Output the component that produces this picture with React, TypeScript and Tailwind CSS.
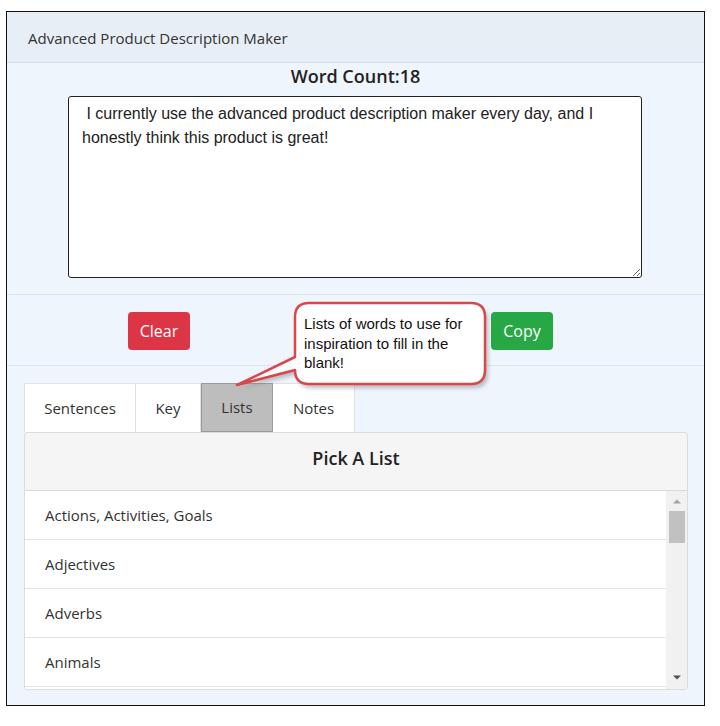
import React from "react";

const items = ["Actions, Activities, Goals", "Adjectives", "Adverbs", "Animals"];

export default function App() {
  const ui = { fontFamily: '"Open Sans", "Noto Sans", sans-serif' };
  const arial = { fontFamily: '"Liberation Sans", Arial, sans-serif' };
  return (
    <div className="relative w-[720px] h-[726px] bg-white pt-[11px] pl-[6px]" style={ui}>
      <div className="w-[699px] h-[695px] border border-[#111] bg-[#eef5fd] flex flex-col">
        {/* header */}
        <div className="h-[51px] shrink-0 bg-[#e8eef6] border-b border-[#d3dbe4] flex items-center pl-[21px] pt-[2px] text-[15px] text-[#333]">
          Advanced Product Description Maker
        </div>
        {/* word count section */}
        <div className="border-b border-[#dae3ed] pb-[16px]">
          <div className="text-center text-[18px] leading-[26px] font-semibold text-[#222]">Word Count:18</div>
          <textarea
            readOnly
            wrap="off"
            className="block mt-[7px] ml-[61px] w-[574px] h-[182px] bg-white border border-[#222] rounded-[3px] pl-[13px] pt-[5px] text-[16px] leading-[24px] text-[#222] overflow-hidden outline-none"
            style={arial}
            value={" I currently use the advanced product description maker every day, and I\nhonestly think this product is great!"}
          />
        </div>
        {/* buttons */}
        <div className="border-b border-[#dae3ed] pt-[17px] pb-[15px] flex">
          <div className="ml-[121px] w-[62px] h-[38px] rounded-[4px] bg-[#dc3545] text-white text-[16px] flex items-center justify-center">Clear</div>
          <div className="ml-[301px] w-[62px] h-[38px] rounded-[4px] bg-[#28a745] text-white text-[16px] flex items-center justify-center">Copy</div>
        </div>
        {/* tabs */}
        <div className="pt-[17px] pl-[17px]">
          <div className="flex h-[49px] text-[15px] text-[#333]">
            <div className="w-[112px] bg-white border border-[#dee2e6] border-b-0 flex items-center justify-center">Sentences</div>
            <div className="w-[65px] bg-white border-t border-r border-[#dee2e6] flex items-center justify-center">Key</div>
            <div className="w-[72px] bg-[#bdbdbd] border border-[#9a9a9a] flex items-center justify-center">Lists</div>
            <div className="w-[82px] bg-white border-t border-r border-[#dee2e6] flex items-center justify-center">Notes</div>
          </div>
          <div className="w-[664px] h-[258px] border border-[#dcdcdc] rounded-[3px] bg-[#f5f5f5] flex flex-col overflow-hidden">
            <div className="h-[58px] shrink-0 border-b border-[#d9d9d9] flex items-center justify-center pb-[6px] text-[18px] font-semibold text-[#222]">Pick A List</div>
            <div className="flex h-[198px]">
              <div className="flex-1 overflow-hidden bg-white">
                {items.map((t) => (
                  <div key={t} className="h-[49px] border-b border-[#e3e3e3] flex items-center pl-[20px] text-[15px] text-[#333]">
                    {t}
                  </div>
                ))}
              </div>
              <div className="w-[21px] bg-[#f1f1f1] flex flex-col items-center">
                <svg width="10" height="6" viewBox="0 0 10 6" className="mt-[7px]">
                  <path d="M1 5.5 L5 1.5 L9 5.5 Z" fill="#a3a3a3" />
                </svg>
                <div className="mt-[7px] w-[16px] h-[32px] bg-[#c1c1c1]" />
                <div className="flex-1" />
                <svg width="10" height="6" viewBox="0 0 10 6" className="mb-[8px]">
                  <path d="M1 0.5 L9 0.5 L5 4.5 Z" fill="#505050" />
                </svg>
              </div>
            </div>
          </div>
        </div>
      </div>

      {/* callout overlay */}
      <svg className="absolute left-[230px] top-[298px]" width="270" height="100" viewBox="0 0 270 100">
        <defs>
          <filter id="sh" x="-10%" y="-10%" width="130%" height="140%">
            <feGaussianBlur stdDeviation="2" />
          </filter>
        </defs>
        <path
          d="M79 5 H241 Q255 5 255 19 V72 Q255 86 241 86 H79 Q65 86 65 72 L7 87 L65 59 V19 Q65 5 79 5 Z"
          fill="#8a8a8a"
          opacity="0.55"
          transform="translate(3 4)"
          filter="url(#sh)"
        />
        <path
          d="M79 5 H241 Q255 5 255 19 V72 Q255 86 241 86 H79 Q65 86 65 72 L7 87 L65 59 V19 Q65 5 79 5 Z"
          fill="#ffffff"
          stroke="#d9474c"
          strokeWidth="2.5"
          strokeLinejoin="round"
        />
      </svg>
      <div className="absolute left-[304px] top-[314px] w-[178px] text-[15px] leading-[19.5px] text-[#111]" style={arial}>
        Lists of words to use for inspiration to fill in the blank!
      </div>
    </div>
  );
}
